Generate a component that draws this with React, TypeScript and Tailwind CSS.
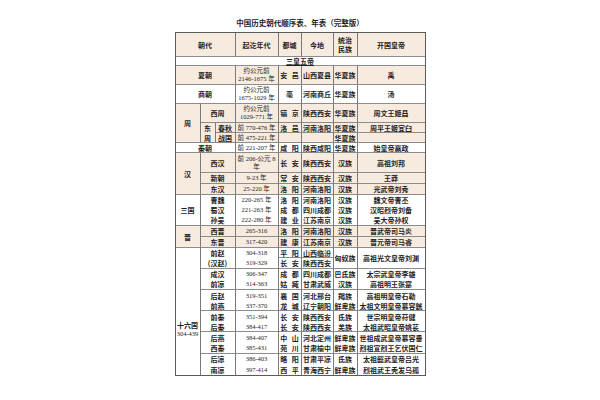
import React from "react";

const CS: Record<number, string> = { 1: "", 2: "col-span-2", 3: "col-span-3", 8: "col-span-8" };
const RS: Record<number, string> = { 1: "", 2: "row-span-2", 3: "row-span-3", 12: "row-span-12" };

type GP = {
  c?: number;
  r?: number;
  b?: boolean;
  e?: boolean;
  t?: boolean;
  y?: boolean;
  cls?: string;
  children?: React.ReactNode;
};

const G = ({ c = 1, r = 1, b = false, e = false, t = false, y = false, cls = "", children }: GP) => (
  <div
    className={`flex items-center justify-center text-center whitespace-nowrap ${CS[c]} ${RS[r]} ${
      b ? "border-b border-b-[#8c8c8c]" : ""
    } ${e ? "" : "border-r border-r-[#7a7a7a]"} ${t ? "bg-[#f7eadf]" : "bg-white"} ${
      y ? "font-['Liberation_Serif','Noto_Sans_CJK_SC',serif] text-[6.5px] font-normal" : ""
    } ${cls}`}
  >
    <div>{children}</div>
  </div>
);

type SP = {
  n: React.ReactNode;
  span?: number;
  y: React.ReactNode;
  city: string;
  place: string;
  nat: string;
  emp: string;
  t?: boolean;
  b?: boolean;
};

const Std = ({ n, span = 2, y, city, place, nat, emp, t = false, b = false }: SP) => (
  <>
    <G c={span} t={t} b={b}>{n}</G>
    <G y t={t} b={b}>{y}</G>
    <G t={t} b={b} cls="[word-spacing:3px]">{city}</G>
    <G t={t} b={b}>{place}</G>
    <G t={t} b={b}>{nat}</G>
    <G e t={t} b={b}>{emp}</G>
  </>
);

const sixteen = [
  { n: "成汉", y: "306-347", city: "成 都", place: "四川成都", nat: "巴氐族", emp: "太宗武皇帝李雄" },
  { n: "前凉", y: "314-363", city: "姑 臧", place: "甘肃武威", nat: "汉族", emp: "高祖明王张寔" },
  { n: "后赵", y: "319-351", city: "襄 国", place: "河北邢台", nat: "羯族", emp: "高祖明皇帝石勒" },
  { n: "前燕", y: "337-370", city: "龙 城", place: "辽宁朝阳", nat: "鲜卑族", emp: "太祖文明皇帝慕容皝" },
  { n: "前秦", y: "351-394", city: "长 安", place: "陕西西安", nat: "氐族", emp: "世宗明皇帝苻健" },
  { n: "后秦", y: "384-417", city: "长 安", place: "陕西西安", nat: "羌族", emp: "太祖武昭皇帝姚苌" },
  { n: "后燕", y: "384-407", city: "中 山", place: "河北定州", nat: "鲜卑族", emp: "世祖成武皇帝慕容垂" },
  { n: "西秦", y: "385-431", city: "苑 川", place: "甘肃榆中", nat: "鲜卑族", emp: "烈祖宣烈王乞伏国仁" },
  { n: "后凉", y: "386-403", city: "略 阳", place: "甘肃平凉", nat: "氐族", emp: "太祖懿武皇帝吕光" },
  { n: "南凉", y: "397-414", city: "西 平", place: "青海西宁", nat: "鲜卑族", emp: "烈祖武王秃发乌孤" },
];

export default function App() {
  return (
    <div className="w-[600px] h-[400px] bg-white pt-[18px] font-['Noto_Sans_CJK_SC',sans-serif] text-[#1e1e1e]">
      <div className="text-center text-[7.5px] leading-[9px] font-bold">中国历史朝代顺序表、年表（完整版）</div>
      <div className="mx-auto mt-[5px] w-max border border-[#5a5a5a] grid grid-cols-[25px_15px_20px_43px_23px_32px_24px_67px] grid-rows-[24px_9px_19px_19px_19px_10px_10px_10px_20px_11px_11px_10px_10px_11px_11px_11px_10px_11px_10px_11px_11px_10px_11px_10px_11px_11px_10px_11px] text-[7px] leading-[8px] font-bold">
        {/* header */}
        <G c={3} t b>朝代</G>
        <G t b>起讫年代</G>
        <G t b>都城</G>
        <G t b>今地</G>
        <G t b cls="leading-[9px]">
          统治
          <br />
          民族
        </G>
        <G e t b>开国皇帝</G>

        {/* 三皇五帝 */}
        <G c={8} e b cls="underline underline-offset-1">三皇五帝</G>

        <Std n="夏朝" span={3} t b y={<>约公元前<br />2146-1675 年</>} city="安 邑" place="山西夏县" nat="华夏族" emp="禹" />
        <Std n="商朝" span={3} b y={<>约公元前<br />1675-1029 年</>} city="亳" place="河南商丘" nat="华夏族" emp="汤" />

        {/* 周 */}
        <G r={3} t b>周</G>
        <Std n="西周" t b y={<>约公元前<br />1029-771 年</>} city="镐 京" place="陕西西安" nat="华夏族" emp="周文王姬昌" />
        <G r={2} t b cls="leading-[10px]">
          东
          <br />
          周
        </G>
        <Std n="春秋" span={1} t b y="前 770-476 年" city="洛 邑" place="河南洛阳" nat="华夏族" emp="周平王姬宜臼" />
        <Std n="战国" span={1} t b y="前 475-221 年" city="" place="" nat="华夏族" emp="" />

        <Std n="秦朝" span={3} b y="前 221-207 年" city="咸 阳" place="陕西咸阳" nat="华夏族" emp="始皇帝嬴政" />

        {/* 汉 */}
        <G r={3} t b>汉</G>
        <Std n="西汉" t b y={<>前 206-公元 8<br />年</>} city="长 安" place="陕西西安" nat="汉族" emp="高祖刘邦" />
        <Std n="新朝" t b y="9-23 年" city="常 安" place="陕西西安" nat="汉族" emp="王莽" />
        <Std n="东汉" t b y="25-220 年" city="洛 阳" place="河南洛阳" nat="汉族" emp="光武帝刘秀" />

        {/* 三国 */}
        <G r={3} b>三国</G>
        <Std n="曹魏" y="220-265 年" city="洛 阳" place="河南洛阳" nat="汉族" emp="魏文帝曹丕" />
        <Std n="蜀汉" y="221-263 年" city="成 都" place="四川成都" nat="汉族" emp="汉昭烈帝刘备" />
        <Std n="孙吴" b y="222-280 年" city="建 业" place="江苏南京" nat="汉族" emp="吴大帝孙权" />

        {/* 晋 */}
        <G r={2} t b>晋</G>
        <Std n="西晋" t b y="265-316" city="洛 阳" place="河南洛阳" nat="汉族" emp="晋武帝司马炎" />
        <Std n="东晋" t b y="317-420" city="建 康" place="江苏南京" nat="汉族" emp="晋元帝司马睿" />

        {/* 十六国 */}
        <G r={12} cls="pt-[35px]">
          十六国
          <br />
          <span className="font-['Liberation_Serif',serif] font-normal text-[6.5px]">304-439</span>
        </G>
        <G c={2} r={2} b cls="leading-[10px]">
          前赵
          <br />
          (汉赵)
        </G>
        <G y>304-318</G>
        <G b cls="[word-spacing:3px]">平 阳</G>
        <G b>山西临汾</G>
        <G r={2} b>匈奴族</G>
        <G r={2} e b>高祖光文皇帝刘渊</G>
        <G y b>319-329</G>
        <G b cls="[word-spacing:3px]">长 安</G>
        <G b>陕西西安</G>

        {sixteen.map((d, i) => (
          <Std key={d.n} {...d} b={i % 2 === 1 && i !== sixteen.length - 1} />
        ))}
      </div>
    </div>
  );
}
